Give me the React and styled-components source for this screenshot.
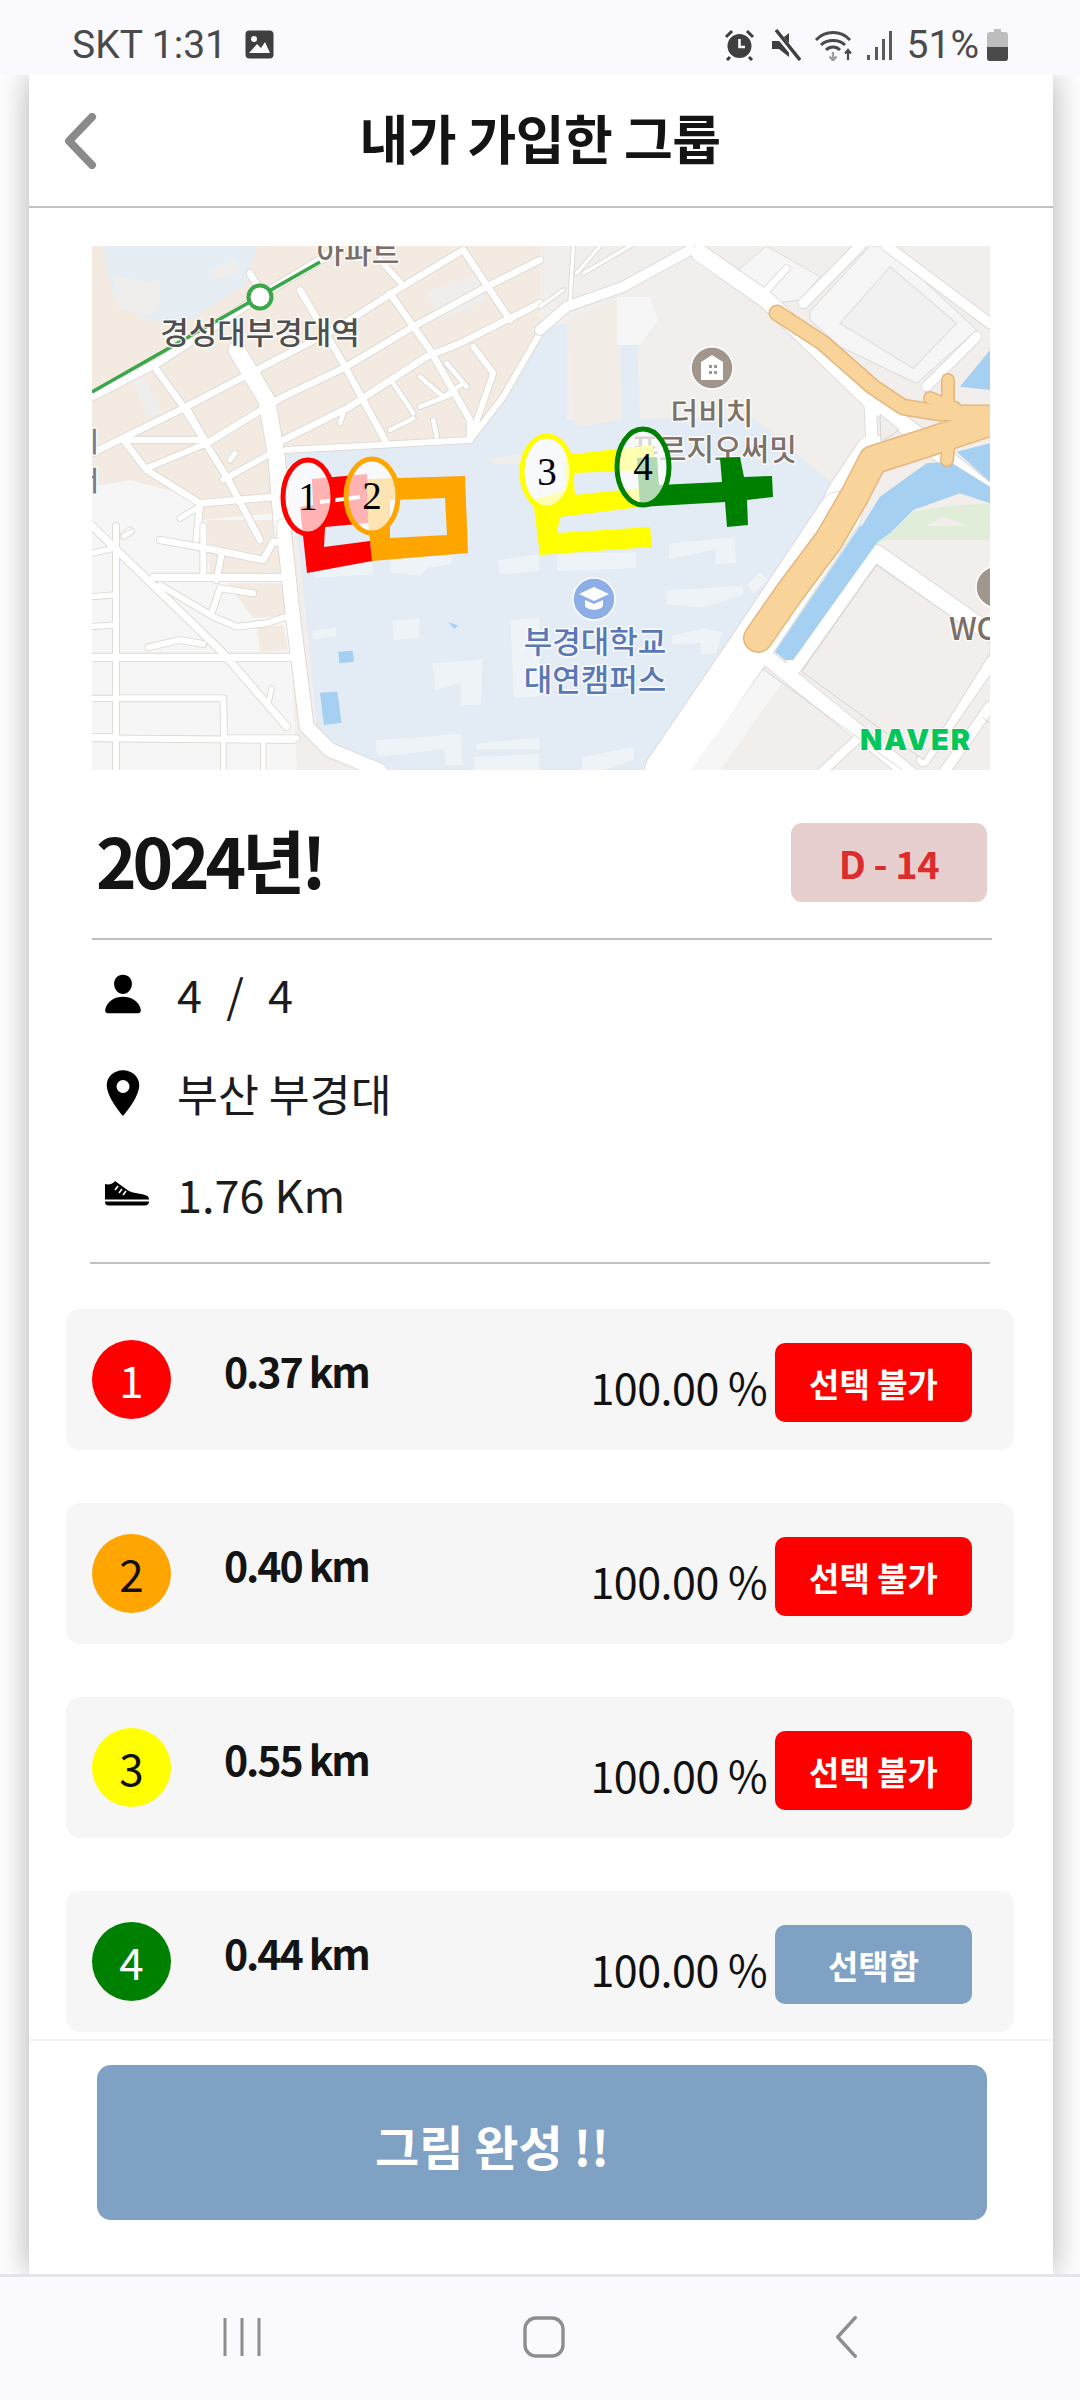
import React from 'react';
import styled, { createGlobalStyle } from 'styled-components';
import { IoPerson, IoLocationSharp } from 'react-icons/io5';

const Global = createGlobalStyle`
  html, body { margin: 0; padding: 0; background: #f9f9fe; }
  * { box-sizing: border-box; }
  body { font-family: "Noto Sans CJK KR", "Noto Sans", sans-serif; }
`;

const Page = styled.div`
  width: 1080px;
  height: 2400px;
  display: flex;
  flex-direction: column;
  overflow: hidden;
  background: #fff;
`;

const StatusBar = styled.div`
  height: 75px;
  flex: none;
  background: #f9f9fe;
  display: flex;
  align-items: center;
  justify-content: space-between;
  padding: 14px 72px 0 72px;
  font-family: Roboto, sans-serif;
  font-size: 39px;
  color: #4a4a4a;
  position: relative;
  z-index: 2;
`;

const StatusGroup = styled.div`
  display: flex;
  align-items: center;
  gap: ${({ $gap }) => $gap || 0}px;
`;

const Main = styled.div`
  flex: 1;
  min-height: 0;
  padding: 0 27px 0 29px;
  background: #fff;
`;

const Card = styled.div`
  height: 100%;
  display: flex;
  flex-direction: column;
  background: #fff;
  box-shadow: 0 0 32px rgba(0, 0, 0, 0.32);
`;

const Header = styled.header`
  height: 133px;
  flex: none;
  display: grid;
  grid-template-columns: 1fr auto 1fr;
  align-items: center;
  border-bottom: 2px solid #c2c2c2;
`;

const BackButton = styled.div`
  padding-left: 35px;
  display: flex;
  align-items: center;
`;

const Title = styled.h1`
  margin: 0 2px 8px 0;
  font-size: 53px;
  font-weight: 700;
  color: #141414;
  letter-spacing: -0.5px;
`;

const Body = styled.div`
  flex: 1;
  min-height: 0;
  overflow: hidden;
  padding-top: 38px;
`;

const MapFrame = styled.svg`
  display: block;
  width: 898px;
  height: 524px;
  margin-left: 63px;
`;

const TitleRow = styled.div`
  height: 170px;
  margin: 0 61px 0 63px;
  display: flex;
  align-items: center;
  justify-content: space-between;
  border-bottom: 2px solid #c0c0c0;
  padding-left: 4px;
  padding-right: 5px;
`;

const GroupName = styled.div`
  font-size: 69px;
  font-weight: 700;
  color: #141414;
  letter-spacing: -4.2px;
  margin-top: 10px;
`;

const Badge = styled.div`
  width: 196px;
  height: 79px;
  border-radius: 11px;
  background: #e8cfcf;
  color: #dd2c2c;
  font-size: 38px;
  font-weight: 700;
  letter-spacing: -0.5px;
  display: flex;
  align-items: center;
  justify-content: center;
  margin-top: 16px;
`;

const InfoList = styled.div`
  height: 324px;
  margin: 0 63px 0 61px;
  padding: 0 0 0 14px;
  border-bottom: 2px solid #c0c0c0;
  display: flex;
  flex-direction: column;
`;

const InfoRow = styled.div`
  height: 99px;
  display: flex;
  align-items: center;
  font-size: ${({ $size }) => $size || 45}px;
  font-weight: 400;
  color: #1c1c1c;
  word-spacing: ${({ $words }) => $words || 0}px;
  margin-top: ${({ $top }) => $top || 0}px;
`;

const InfoIcon = styled.span`
  width: ${({ $left }) => 73 + ($left || 0)}px;
  margin-left: ${({ $left }) => -($left || 0)}px;
  flex: none;
  display: flex;
  align-items: center;
  svg { display: block; }
`;

const Runs = styled.div`
  padding: 45px 39px 0 37px;
  display: flex;
  flex-direction: column;
  gap: 53px;
`;

const Run = styled.div`
  height: 141px;
  flex: none;
  border-radius: 14px;
  background: #f6f6f6;
  display: flex;
  align-items: center;
  padding: 0 42px 0 26px;
`;

const Dot = styled.div`
  width: 79px;
  height: 79px;
  flex: none;
  border-radius: 50%;
  background: ${({ $bg }) => $bg};
  color: ${({ $fg }) => $fg};
  font-size: 44px;
  font-weight: 400;
  display: flex;
  align-items: center;
  justify-content: center;
  padding-bottom: 2px;
`;

const Km = styled.div`
  margin: -20px 0 0 53px;
  font-size: 41px;
  font-weight: 700;
  letter-spacing: -2.1px;
  color: #141414;
`;

const Percent = styled.div`
  margin: 12px 8px 0 auto;
  font-size: 43px;
  font-weight: 400;
  letter-spacing: -0.5px;
  color: #111;
`;

const PickButton = styled.div`
  width: 197px;
  height: 79px;
  flex: none;
  border-radius: 10px;
  background: ${({ $picked }) => ($picked ? '#7fa1c3' : '#ff0000')};
  color: #fff;
  font-size: 33px;
  font-weight: 700;
  display: flex;
  align-items: center;
  justify-content: center;
  margin-top: 6px;
`;

const Footer = styled.div`
  height: 235px;
  flex: none;
  border-top: 2px solid #f0f0f0;
  padding: 24px 66px 0 68px;
`;

const DoneButton = styled.div`
  height: 155px;
  border-radius: 14px;
  background: #7fa1c3;
  color: #fff;
  font-size: 48px;
  font-weight: 700;
  display: flex;
  align-items: center;
  justify-content: center;
  padding: 4px 100px 0 0;
`;

const NavBar = styled.nav`
  height: 126px;
  flex: none;
  background: #f9f9fe;
  border-top: 3px solid #e4e4ee;
  display: grid;
  grid-template-columns: repeat(3, 302px);
  padding: 0 0 0 91px;
  align-items: center;
  justify-items: center;
  position: relative;
  z-index: 2;
  svg { display: block; margin-top: -3px; }
`;

const runs = [
  { n: 1, bg: '#ff0000', fg: '#fff', km: '0.37 km' },
  { n: 2, bg: '#ffa500', fg: '#111', km: '0.40 km' },
  { n: 3, bg: '#ffff00', fg: '#111', km: '0.55 km' },
  { n: 4, bg: '#008000', fg: '#fff', km: '0.44 km', picked: true },
];

// road centre lines, written in 3x crop coordinates of each map quarter
const nwRoads = [
  ['M36 470 L230 370 L540 170 L760 35', 24],
  ['M36 640 L300 510 L530 390 L770 265 L950 150 L1150 30', 20],
  ['M130 600 L360 600 M320 505 L380 610 L610 470 L790 385 L1000 260 L1230 135 L1380 60', 20],
  ['M200 685 L380 610 M430 720 L590 630', 18],
  ['M610 600 L810 500 L1040 350 L1140 310 L1300 230 L1380 190', 20],
  ['M510 100 L545 160', 20],
  ['M470 330 L560 480 L590 650 L610 900', 50],
  ['M230 390 L310 500 L445 720 L540 900', 20],
  ['M130 600 L200 690 L360 790 L350 900', 20],
  ['M660 150 L790 370 L920 610', 20],
  ['M930 160 L1050 330 L1170 540 L1170 600', 20],
  ['M1150 30 L1290 240', 20],
  ['M900 60 L960 125 M1180 320 L1240 400 L1170 600', 18],
  ['M360 790 L590 770', 20],
  ['M620 630 L1170 600 L1270 470 L1380 280', 18],
  ['M940 430 L1000 520 M1020 410 L1090 470 L1150 430 M1020 500 L1110 465 M930 570 L1000 535 M790 520 L780 550', 14],
  ['M1060 540 L1070 590 M1100 370 L1160 440', 14],
  ['M465 640 L450 660 M300 835 L350 805 M130 885 L150 870', 16],
];

const swRoads = [
  ['M610 18 L640 300 L680 620 L750 690 L900 752', 42],
  ['M240 60 L380 85 L550 120 L580 65 L610 70', 20],
  ['M36 100 L100 85 M36 230 L100 225 M36 320 L100 315 M36 535 L100 535 M36 650 L100 650', 16],
  ['M108 18 L108 752', 18],
  ['M220 172 L610 172', 22],
  ['M36 412 L640 412', 22],
  ['M110 535 L430 535 L432 655 L650 655 M36 655 L640 660', 18],
  ['M36 18 L430 400 L620 620', 22],
  ['M240 195 L400 290 L470 320 L560 310 L620 290', 18],
  ['M205 382 L300 360 L370 372', 18],
  ['M520 220 L420 205 L395 280', 18],
  ['M370 18 L370 160 M425 100 L410 180', 18],
  ['M130 50 L155 35 M575 505 L565 550 M430 660 L430 752 M550 665 L550 752', 14],
];

const neRoads = [
  ['M450 30 L250 140 L80 200 L0 270', 30],
  ['M100 18 L90 190 M180 18 L110 100 M270 18 L130 100 M0 200 L70 150', 10],
  ['M480 40 L680 180 L990 480 L1100 560 L1350 760', 50],
  ['M960 18 L790 190', 30],
  ['M1040 18 L1350 250', 30],
  ['M1310 290 L1160 440', 28],
  ['M680 150 L740 85', 20],
  ['M990 480 L1000 700 L830 900', 34],
  ['M1000 640 L920 760 L850 900', 110],
];

const seRoads = [
  ['M900 -20 L620 400 L380 752', 130],
  ['M1010 100 L1350 340', 50],
  ['M1000 100 L760 440', 50],
  ['M690 420 L1120 770', 44],
  ['M1150 720 L1350 430', 38],
  ['M960 650 L850 752', 26],
  ['M1350 560 L1210 760', 30],
];

const nwBuildings = [
  'M100 110 L240 130 L240 190 L215 225 L120 210 Z',
  'M390 90 L470 60 L470 100 L400 120 Z',
  'M1040 160 L1190 105 L1215 180 L1080 240 Z',
  'M155 420 L195 410 L245 520 L200 530 Z',
  'M1230 660 L1320 640 L1330 670 L1240 675 Z',
];

const campusBuildings = [
  // written in SW crop coords
  'M695 330 L770 320 L770 350 L697 360 Z',
  'M935 300 L1020 295 L1020 355 L940 362 Z',
  'M1055 430 L1210 415 L1205 555 L1140 558 L1140 490 L1065 512 Z',
  'M885 660 L1145 640 L1150 735 L1095 738 L1090 690 L890 712 Z',
  'M700 130 L880 125 L880 165 L700 175 Z',
  'M930 110 L1120 105 L1115 135 L1040 145 L1020 170 L930 158 Z',
  'M1250 120 L1380 100 L1380 155 L1260 165 Z',
  'M1290 300 L1380 290 L1380 530 L1300 535 Z',
  'M1185 670 L1380 650 L1380 690 L1190 690 Z',
  'M1180 710 L1380 700 L1380 752 L1180 752 Z',
];

const seBuildings = [
  'M385 70 L585 50 L590 130 L525 135 L525 90 L385 120 Z',
  'M380 210 L610 195 L610 225 L490 265 L380 255 Z',
  'M620 195 L660 155 L685 180 L640 222 Z',
  'M395 345 L490 325 L550 335 L530 400 L480 405 L480 370 L395 375 Z',
  'M125 710 L280 680 L285 720 L190 752 L125 752 Z',
  'M50 100 L290 95 L290 145 L50 155 Z',
];

// grey casing first, then the white fill on top of all of it
const Roads = ({ items, casing = '#dbd6cf' }) => (
  <g fill="none" strokeLinecap="round" strokeLinejoin="round">
    <g stroke={casing}>
      {items.map(([d, w]) => (
        <path key={d} d={d} strokeWidth={w + 5} />
      ))}
    </g>
    <g stroke="#fff">
      {items.map(([d, w]) => (
        <path key={d} d={d} strokeWidth={w} />
      ))}
    </g>
  </g>
);

const labelStyle = { fontFamily: '"Noto Sans CJK KR", sans-serif', fontWeight: 500, paintOrder: 'stroke', strokeLinejoin: 'round' };

const Label = ({ x, y, fill, anchor = 'middle', size = 30, children }) => (
  <text x={x} y={y} fill={fill} stroke="rgba(255,255,255,.8)" strokeWidth="3" fontSize={size} textAnchor={anchor} style={labelStyle}>
    {children}
  </text>
);

const Marker = ({ cx, cy, rx, ry, color, n }) => (
  <g>
    <ellipse cx={cx} cy={cy} rx={rx} ry={ry} fill="rgba(255,255,255,.7)" stroke={color} strokeWidth="5" />
    <text x={cx} y={cy + 13} fontSize="39" textAnchor="middle" fill="#000" style={{ fontFamily: '"Liberation Serif", serif' }}>
      {n}
    </text>
  </g>
);

const RouteMap = () => (
  <MapFrame viewBox="92 246 898 524">
    <rect x="92" y="246" width="898" height="524" fill="#f1eeeb" />

    {/* land use */}
    <path d="M92 246 H540 V330 L500 398 L470 437 L287 453 L297 770 H92 Z" fill="#f3ebe2" />
    <path d="M92 487 L130 480 L205 500 L200 520 L285 512 L297 770 H92 Z" fill="#f6f6f6" />
    <path d="M207 520 H279 L280 572 L210 575 Z M227 583 L283 583 L286 616 L253 618 Z M257 628 L283 625 L288 650 L260 652 Z" fill="#f3ebe2" />
    <path d="M103 246 H257 L245 285 L190 320 L150 322 L115 300 Z" fill="#e6edf3" />
    <path d="M287 453 L470 437 L500 398 L540 330 L567 323 L567 420 L753 417 L840 490 L640 770 H383 L337 747 L317 727 L297 526 Z" fill="#e3ebf4" />
    <path d="M567 320 L617 300 L622 420 L575 427 Z" fill="#f2ece6" />
    <path d="M620 328 L637 328 L640 420 L622 420 Z" fill="#e3ebf4" />
    <path d="M617 297 H650 L658 320 L640 345 H617 Z" fill="#f6f6f6" />

    <g transform="translate(80 240) scale(.3333)">
      {nwBuildings.map(d => (
        <path key={d} d={d} fill="#efeeec" />
      ))}
      <Roads items={nwRoads} />
    </g>

    <g transform="translate(80 520) scale(.3333)">
      <g fill="#eef3f8" stroke="#e6ebf1" strokeWidth="3">
        {campusBuildings.map(d => (
          <path key={d} d={d} />
        ))}
      </g>
      <path d="M775 395 L818 392 L822 425 L778 430 Z M720 518 L772 515 L785 608 L732 615 Z M1105 305 L1135 318 L1122 326 Z" fill="#a6d0f2" />
      <Roads items={swRoads} />
    </g>

    {/* north east quarter: blocks, water, roads */}
    <g transform="translate(540 240) scale(.3333)">
      <path d="M590 95 L680 18 L840 110 L780 180 L700 190 Z" fill="#f6f6f6" stroke="#dcdcdc" strokeWidth="3" />
      <path d="M810 215 L990 18 L1040 18 L1310 270 L1130 430 L900 320 L810 240 Z" fill="#f6f6f6" stroke="#d9d9d9" strokeWidth="3" />
      <path d="M900 250 L1050 80 L1250 250 L1120 385 Z" fill="#f1f1f1" stroke="#e2e2e2" strokeWidth="4" />
      <path d="M1350 330 L1260 440 L1350 450 Z M1350 610 L1250 635 L1350 725 Z" fill="#a6d0f2" />
      <Roads items={neRoads} casing="#d8d8d8" />
      <path d="M1160 670 L1020 770 L940 900 H1030 L1120 810 L1260 760 L1350 790 V740 L1230 665 Z" fill="#a6d0f2" />
      <path d="M1030 900 L1120 815 L1210 800 L1350 790 V900 Z" fill="#e0eed9" />
      <path d="M1075 900 L1210 830 L1350 880 V900 Z" fill="#f1eeeb" />
    </g>

    <g transform="translate(540 520) scale(.3333)">
      <path d="M1000 75 L1080 18 H1300 L1350 40 V60 L1040 60 Z" fill="#e0eed9" />
      <g fill="#eef3f8" stroke="#e6ebf1" strokeWidth="3">
        {seBuildings.map(d => (
          <path key={d} d={d} />
        ))}
      </g>
      <Roads items={seRoads} casing="#d8d8d8" />
      <path d="M670 450 L725 490 L540 752 H450 Z" fill="#f6f6f6" />
      <path d="M960 18 L1060 18 L1010 70 L760 420 L735 420 L705 395 Z" fill="#a6d0f2" />
      <path d="M1010 135 L1350 370 V400 L1150 720 L785 455 Z" fill="#f1eeeb" stroke="#cfcfcf" strokeWidth="2.5" />
      <path d="M670 448 L1090 752 M1325 590 L1350 610" stroke="#d0d0d0" strokeWidth="2.5" fill="none" />
    </g>

    {/* interchange ramps */}
    <g fill="none" strokeLinecap="round" strokeLinejoin="round">
      <path d="M777 313 L823 343 L873 387 L903 407 L940 413 L995 413" stroke="#e6b67e" strokeWidth="17" />
      <path d="M995 420 L935 440 L873 460 L855 495 L829 540 L790 592 L758 638" stroke="#e6b67e" strokeWidth="30" />
      <path d="M948 380 L948 408 M930 398 L955 408 M947 460 L950 430" stroke="#e6b67e" strokeWidth="14" />
      <path d="M777 313 L823 343 L873 387 L903 407 L940 413 L995 413" stroke="#f8d49a" strokeWidth="14" />
      <path d="M995 420 L935 440 L873 460 L855 495 L829 540 L790 592 L758 638" stroke="#f8d49a" strokeWidth="27" />
      <path d="M948 380 L948 408 M930 398 L955 408 M947 460 L950 430" stroke="#f8d49a" strokeWidth="11" />
    </g>
    <path d="M880 414 L899 430 L881 442 Z" fill="#f1eeeb" stroke="#d5d5d5" strokeWidth="1" />

    {/* subway */}
    <path d="M92 392 L320 262" stroke="#3ca64a" strokeWidth="3.5" fill="none" />
    <circle cx="260" cy="297" r="11.5" fill="#fff" stroke="#3ca64a" strokeWidth="4" />

    {/* labels */}
    <Label x="358" y="263" fill="#7a6f68">아파트</Label>
    <Label x="260" y="344" fill="#4f4f4f" size="31">경성대부경대역</Label>
    <Label x="99" y="452" fill="#7a7a8a" anchor="end" size="27">의</Label>
    <Label x="99" y="491" fill="#7a7a8a" anchor="end" size="27">서</Label>

    <circle cx="712" cy="368" r="21" fill="#a1968c" stroke="#fff" strokeWidth="1.5" />
    <path d="M701 362 L712 355 L723 362 V380 H701 Z" fill="#fff" />
    <path d="M709 365 h3 v3 h-3 z M714 365 h3 v3 h-3 z M709 371 h3 v3 h-3 z M714 371 h3 v3 h-3 z" fill="#a1968c" />
    <Label x="712" y="424" fill="#7d726a">더비치</Label>
    <Label x="714" y="460" fill="#7d726a">푸르지오써밋</Label>

    <circle cx="594" cy="599" r="21" fill="#8eaee8" stroke="#fff" strokeWidth="1.5" />
    <path d="M579 594 L594 587 L609 594 L594 601 Z M585 600 L594 604 L603 600 V606 C600 611 588 611 585 606 Z" fill="#fff" />
    <Label x="595" y="653" fill="#5a78b5" size="31">부경대학교</Label>
    <Label x="595" y="691" fill="#5a78b5" size="31">대연캠퍼스</Label>

    <circle cx="997" cy="587" r="21" fill="#a1968c" stroke="#fff" strokeWidth="1.5" />
    <Label x="949" y="640" fill="#7a6f68" anchor="start" size="31">WO</Label>

    <text x="860" y="750" fontSize="29" fill="#03c75a" stroke="#fff" strokeWidth="2" style={{ fontFamily: 'Inter, sans-serif', fontWeight: 900, paintOrder: 'stroke' }} textLength="110">
      NAVER
    </text>

    {/* drawn route */}
    <path fillRule="evenodd" d="M367 479 L465 476 L468 553 L372 561 L368 520 Z M390 500 L445 498 L447 535 L390 538 Z" fill="#ffa500" />
    <path d="M312 479 L367 474 L368 523 L325 527 L324 547 L370 541 L372 561 L307 573 L300 507 L313 505 Z" fill="#ff0000" />
    <path d="M320 502 L360 497" stroke="#fff" strokeWidth="4" fill="none" />
    <path d="M565 455 L653 445 L655 470 L573 473 L575 495 L640 488 L640 507 L560 517 L557 533 L650 527 L652 547 L540 555 L533 500 L565 490 Z" fill="#ffff00" />
    <path d="M637 458 L657 457 L659 485 L722 482 L720 458 L740 457 L744 477 L772 476 L773 497 L747 500 L748 525 L727 527 L725 502 L640 507 Z" fill="#008000" />

    <Marker cx={308} cy={497} rx={25} ry={37} color="#ff0000" n={1} />
    <Marker cx={372} cy={496} rx={26} ry={37} color="#ffa500" n={2} />
    <Marker cx={547} cy={472} rx={25} ry={36} color="#ffff00" n={3} />
    <Marker cx={643} cy={467} rx={26} ry={38} color="#008000" n={4} />
  </MapFrame>
);

const ShoeIcon = () => (
  <svg width="45" height="25" viewBox="0 0 45 25">
    <path d="M1 3 C5 4 9 3 11 0 L22 8 C26 12 34 12 41 14 C44 15 45 16 45 18.5 H1 Z" fill="#000" />
    <path d="M14 5 L11 9 M18 8 L15 12 M22 10 L19 14" stroke="#fff" strokeWidth="1.6" />
    <path d="M1 20.5 H45 V21 C45 23 43 24.5 41 24.5 H5 C2 24.5 1 23 1 20.5 Z" fill="#000" />
  </svg>
);

const Chevron = ({ width, height, color, stroke }) => (
  <svg width={width} height={height} viewBox={`0 0 ${width} ${height}`}>
    <path
      d={`M${width - stroke / 2 - 1} ${stroke / 2} L${stroke / 2 + 1} ${height / 2} L${width - stroke / 2 - 1} ${height - stroke / 2}`}
      fill="none"
      stroke={color}
      strokeWidth={stroke}
      strokeLinecap="round"
      strokeLinejoin="round"
    />
  </svg>
);

const StatusIcons = () => (
  <StatusGroup>
    <svg width="31" height="32" viewBox="0 0 31 32" style={{ marginRight: 14 }}>
      <circle cx="15.5" cy="17" r="12" fill="#3f3f3f" />
      <path d="M15.5 10 V18 H21" stroke="#f9f9fe" strokeWidth="2.6" fill="none" />
      <path d="M2 8 L8 2 M29 8 L23 2 M6 28 L3 31 M25 28 L28 31" stroke="#3f3f3f" strokeWidth="3" />
    </svg>
    <svg width="32" height="32" viewBox="0 0 32 32" style={{ marginRight: 13 }}>
      <path d="M3 12 H10 L20 4 V28 L10 20 H3 Z" fill="#3f3f3f" />
      <path d="M5 1 L30 31" stroke="#f9f9fe" strokeWidth="6" />
      <path d="M7 1 L31 31" stroke="#3f3f3f" strokeWidth="3.4" />
    </svg>
    <svg width="42" height="32" viewBox="0 0 42 32" style={{ marginRight: 9 }}>
      <path d="M2 11 C11 1 27 1 36 11 M7 16 C13 10 25 10 31 16 M12 21 C16 17 22 17 26 21" fill="none" stroke="#4a4a4a" strokeWidth="3" />
      <path d="M19 23 V31 M15.5 27.5 L19 31.5 L22.5 27.5" fill="none" stroke="#9a9a9a" strokeWidth="2.2" />
      <path d="M34 31 V21 M31 24.5 L34 21 L37 24.5" fill="none" stroke="#4a4a4a" strokeWidth="2.2" />
    </svg>
    <svg width="28" height="32" viewBox="0 0 28 32" style={{ marginRight: 14 }}>
      <path d="M2 26 h3 v5 h-3 z M10 18 h3 v13 h-3 z M17 10 h3 v21 h-3 z M24 2 h3 v29 h-3 z" fill="#5a5a5a" />
    </svg>
    <span>51%</span>
    <svg width="21" height="32" viewBox="0 0 21 32" style={{ marginLeft: 8 }}>
      <path d="M7 0 H14 V3 H18 C20 3 21 4 21 6 V29 C21 31 20 32 18 32 H3 C1 32 0 31 0 29 V6 C0 4 1 3 3 3 H7 Z" fill="#bdbdbd" />
      <path d="M0 18 H21 V29 C21 31 20 32 18 32 H3 C1 32 0 31 0 29 Z" fill="#4a4a4a" />
    </svg>
  </StatusGroup>
);

const App = () => (
  <Page>
    <Global />
    <StatusBar>
      <StatusGroup $gap={17}>
        <span>SKT 1:31</span>
        <svg width="31" height="31" viewBox="0 0 31 31">
          <rect x="1.5" y="1.5" width="28" height="28" rx="4" fill="#3f3f3f" />
          <circle cx="10" cy="10" r="3" fill="#f9f9fe" />
          <path d="M5 24 L13 15 L17 19 L21 13 L26 24 Z" fill="#f9f9fe" />
        </svg>
      </StatusGroup>
      <StatusIcons />
    </StatusBar>

    <Main>
      <Card>
        <Header>
          <BackButton>
            <Chevron width={33} height={56} color="#8a8a8a" stroke={8} />
          </BackButton>
          <Title>내가 가입한 그룹</Title>
          <span />
        </Header>

        <Body>
          <RouteMap />

          <TitleRow>
            <GroupName>2024년!</GroupName>
            <Badge>D - 14</Badge>
          </TitleRow>

          <InfoList>
            <InfoRow $top={4} $words={2}>
              <InfoIcon $left={3}>
                <IoPerson size={44} color="#000" />
              </InfoIcon>
              <span>4 &nbsp;/&nbsp; 4</span>
            </InfoRow>
            <InfoRow $size={44.5}>
              <InfoIcon $left={7}>
                <IoLocationSharp size={52} color="#000" />
              </InfoIcon>
              <span>부산 부경대</span>
            </InfoRow>
            <InfoRow $top={2}>
              <InfoIcon>
                <ShoeIcon />
              </InfoIcon>
              <span>1.76 Km</span>
            </InfoRow>
          </InfoList>

          <Runs>
            {runs.map(run => (
              <Run key={run.n}>
                <Dot $bg={run.bg} $fg={run.fg}>{run.n}</Dot>
                <Km>{run.km}</Km>
                <Percent>100.00 %</Percent>
                <PickButton $picked={run.picked}>{run.picked ? '선택함' : '선택 불가'}</PickButton>
              </Run>
            ))}
          </Runs>
        </Body>

        <Footer>
          <DoneButton>그림 완성 !!</DoneButton>
        </Footer>
      </Card>
    </Main>

    <NavBar>
      <svg width="38" height="40" viewBox="0 0 38 40">
        <path d="M2 1 V39 M19 1 V39 M36 1 V39" stroke="#8e8e8e" strokeWidth="3" fill="none" />
      </svg>
      <svg width="42" height="42" viewBox="0 0 42 42">
        <rect x="2" y="2" width="38" height="38" rx="11" fill="none" stroke="#8e8e8e" strokeWidth="3.4" />
      </svg>
      <Chevron width={23} height={42} color="#8e8e8e" stroke={3.4} />
    </NavBar>
  </Page>
);

export default App;
